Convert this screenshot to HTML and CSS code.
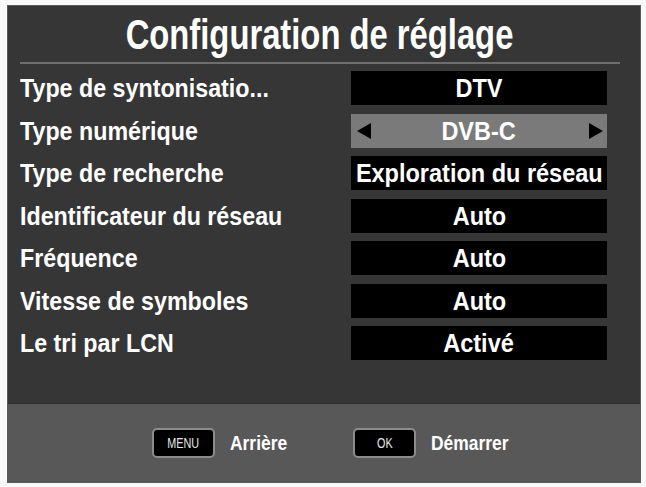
FILE: index.html
```html
<html lang="en"><head>
  <meta charset="UTF-8">
  <meta name="viewport" content="width=device-width, initial-scale=1.0">
  <title>Configuration de réglage</title>
  <link rel="stylesheet" href="styles.css">
</head>
<body>
  <div class="screen">
    <div class="main">
      <div class="title"><span>Configuration de réglage</span></div>

      <div class="rows">
        <div class="label"><span>Type de syntonisatio...</span></div>
        <div class="value"><span>DTV</span></div>

        <div class="label"><span>Type numérique</span></div>
        <div class="value selected">
          <i class="arrow left"></i>
          <span>DVB-C</span>
          <i class="arrow right"></i>
        </div>

        <div class="label"><span>Type de recherche</span></div>
        <div class="value"><span>Exploration du réseau</span></div>

        <div class="label"><span>Identificateur du réseau</span></div>
        <div class="value"><span>Auto</span></div>

        <div class="label"><span>Fréquence</span></div>
        <div class="value"><span>Auto</span></div>

        <div class="label"><span>Vitesse de symboles</span></div>
        <div class="value"><span>Auto</span></div>

        <div class="label"><span>Le tri par LCN</span></div>
        <div class="value"><span>Activé</span></div>
      </div>
    </div>

    <div class="footer">
      <div class="key"><span>MENU</span></div>
      <span class="hint back">Arrière</span>
      <div class="key"><span>OK</span></div>
      <span class="hint">Démarrer</span>
    </div>
  </div>
</body></html>
```

FILE: styles.css
```css
body {
  margin: 0;
  background: #f9f9f9;
  font-family: "Liberation Sans", Arial, sans-serif;
  color: #fff;
}

/* text on the set is a condensed face, squeeze the glyphs */
.title span,
.label span,
.value span,
.key span,
.hint {
  display: inline-block;
}

.screen {
  width: 634px;
  height: 478px;
  margin: 5px 0 0 7px;
  border: 1px solid #5a5a5a;
  box-sizing: border-box;
  display: flex;
  flex-direction: column;
  background: #363636;
}

.main {
  height: 398px;
  padding: 0 12px;
  box-sizing: border-box;
  border-bottom: 1px solid #2c2c2c;
}

.title {
  height: 56px;
  line-height: 58px;
  font-size: 42px;
  font-weight: bold;
  text-align: center;
  border-bottom: 2px solid #6e6e6e;
  margin: 0 8px 0 0;
  white-space: nowrap;
}

.title span {
  transform: scaleX(0.78);
}

.rows {
  display: grid;
  grid-template-columns: 1fr 256px;
  grid-auto-rows: 34px;
  row-gap: 8.5px;
  margin-top: 7px;
  padding-right: 21px;
}

.label {
  font-size: 25px;
  font-weight: bold;
  line-height: 34px;
  white-space: nowrap;
}

.label span {
  transform: scaleX(0.93);
  transform-origin: left center;
}

.value {
  background: #000;
  font-size: 25px;
  font-weight: bold;
  line-height: 34px;
  display: flex;
  justify-content: center;
  position: relative;
  white-space: nowrap;
  overflow: hidden;
}

.value span {
  flex: none;
  transform: scaleX(0.94);
}

.value.selected {
  background: #7a7a7a;
}

.arrow {
  position: absolute;
  top: 9px;
  width: 0;
  height: 0;
  border-top: 8px solid transparent;
  border-bottom: 8px solid transparent;
}

.arrow.left {
  left: 6px;
  border-right: 14px solid #000;
}

.arrow.right {
  right: 4px;
  border-left: 14px solid #000;
}

.footer {
  flex: 1;
  background: #585858;
  display: flex;
  align-items: center;
  padding-left: 144px;
}

.key {
  width: 63px;
  height: 30px;
  box-sizing: border-box;
  border: 2px solid #8c8c8c;
  border-radius: 5px;
  background: #000;
  color: #e6e6e6;
  font-size: 15px;
  line-height: 26px;
  text-align: center;
}

.key span {
  transform: scaleX(0.72);
}

.hint {
  font-size: 21px;
  font-weight: bold;
  margin-left: 15px;
  transform: scaleX(0.83);
  transform-origin: left center;
}

.hint.back {
  margin-right: 54px;
}
```
